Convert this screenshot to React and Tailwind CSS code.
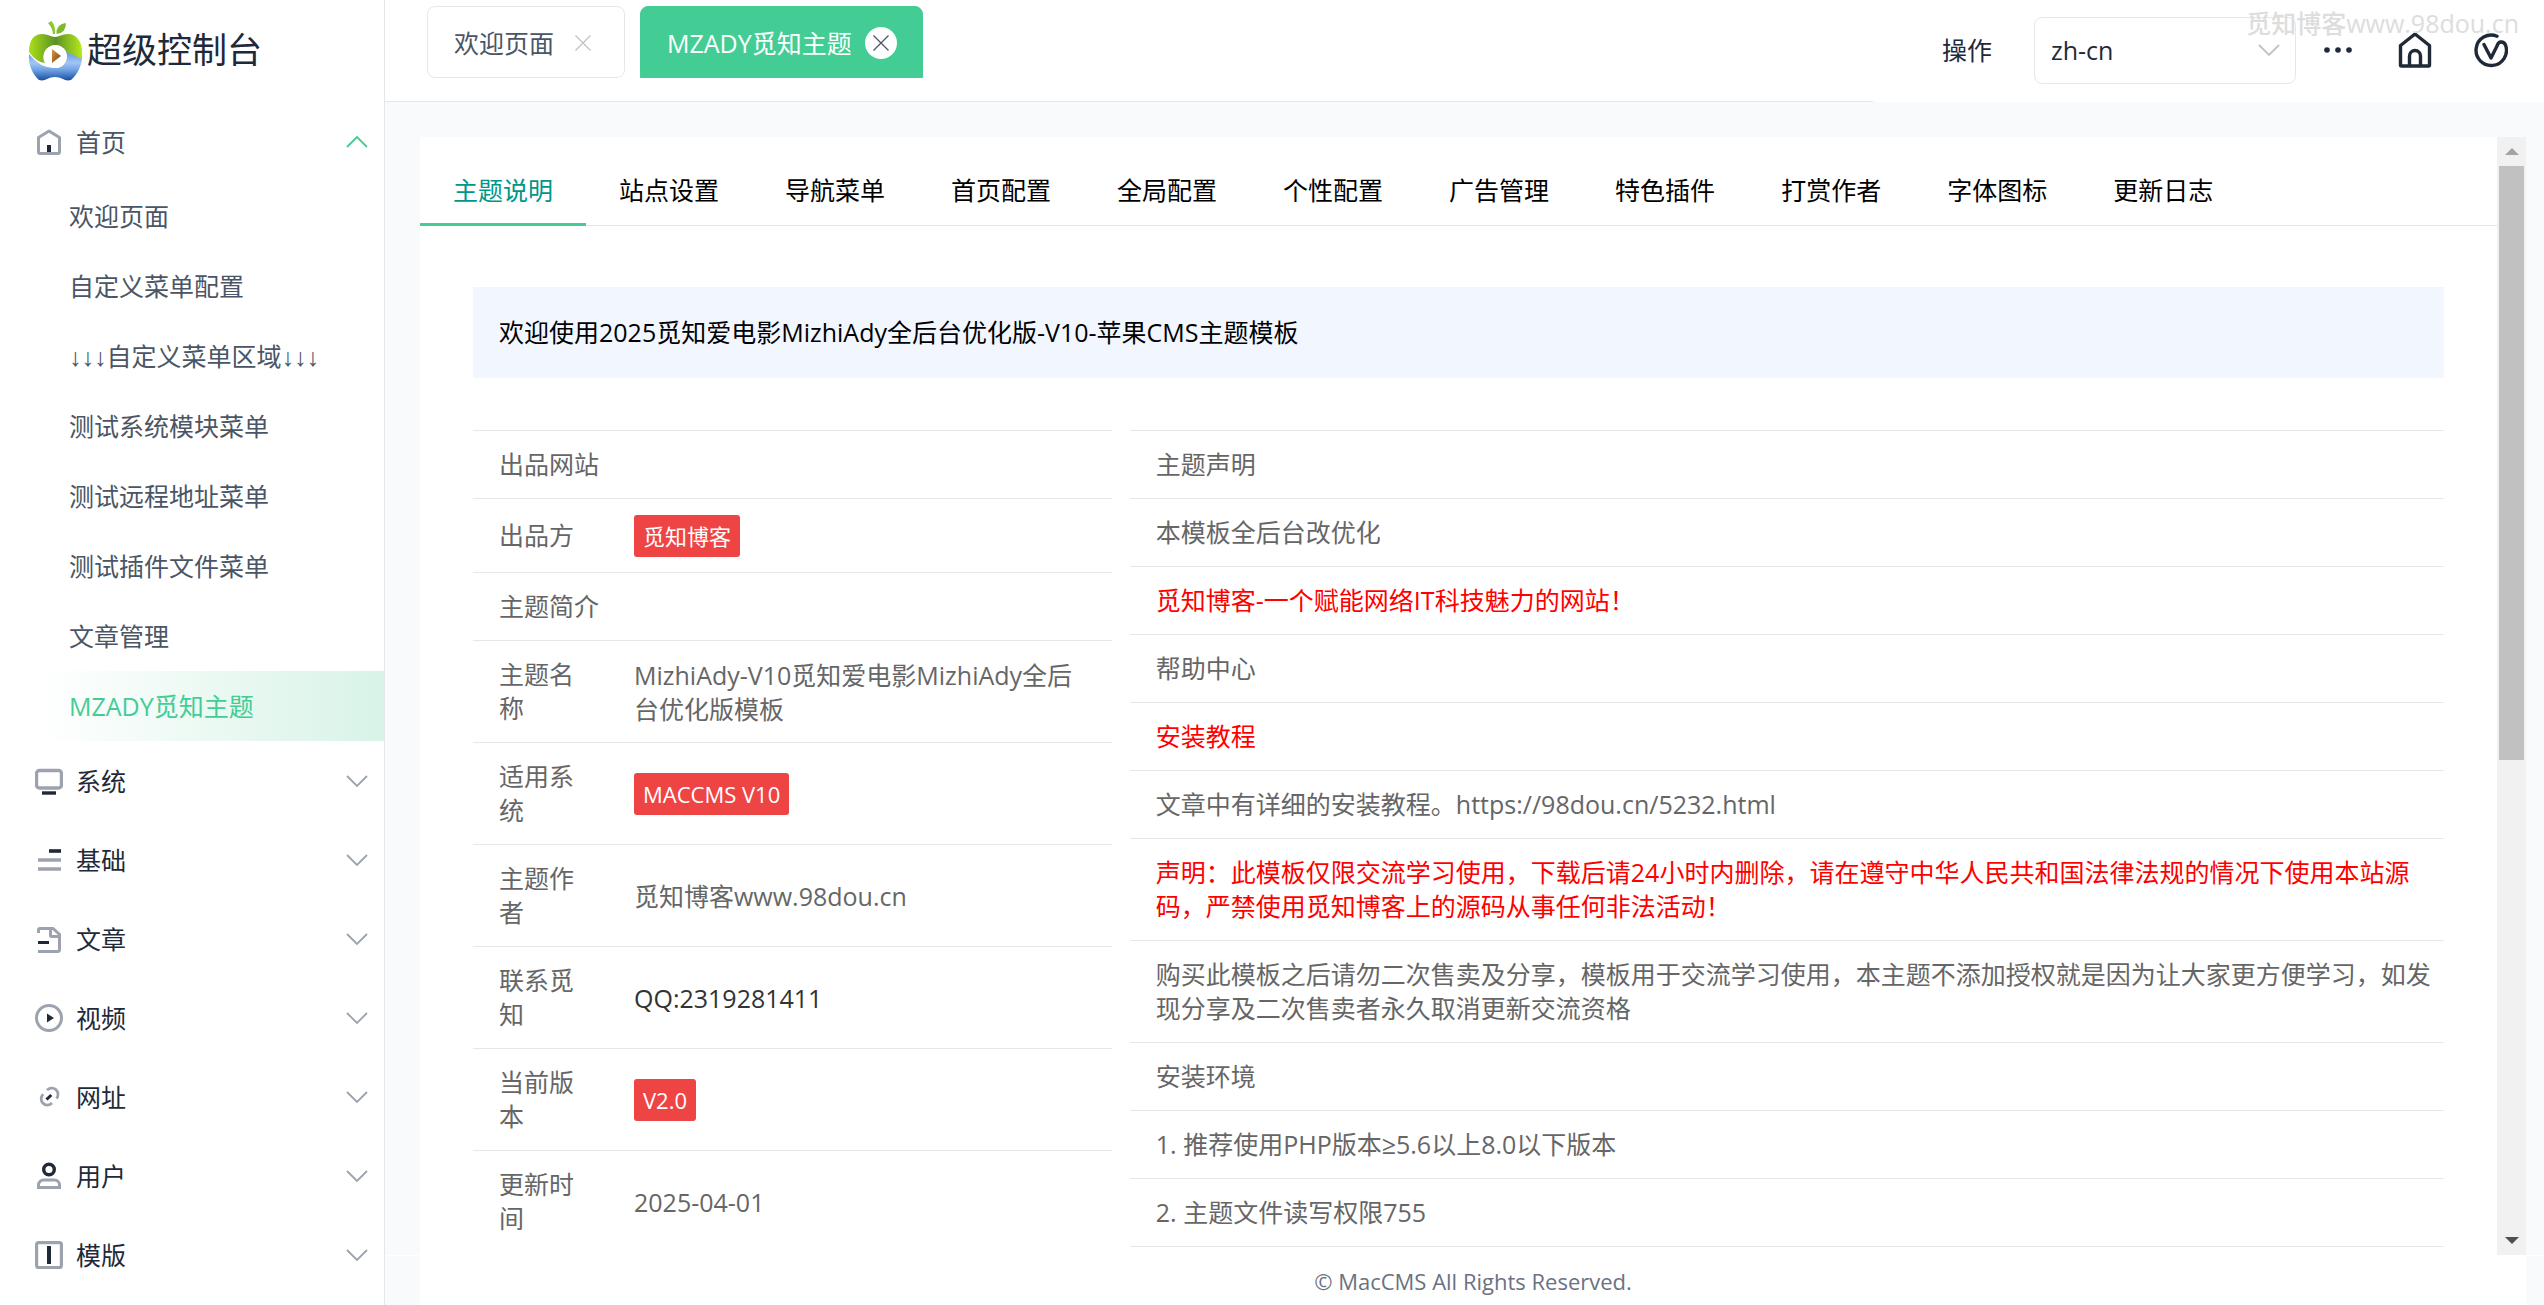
import React, { useState } from 'react';

const menus = [
    { name: '系统', icon: 'monitor' },
    { name: '基础', icon: 'bars' },
    { name: '文章', icon: 'doc' },
    { name: '视频', icon: 'video' },
    { name: '网址', icon: 'link' },
    { name: '用户', icon: 'user' },
    { name: '模版', icon: 'template' },
];

const subMenus = [
    '欢迎页面',
    '自定义菜单配置',
    '↓↓↓自定义菜单区域↓↓↓',
    '测试系统模块菜单',
    '测试远程地址菜单',
    '测试插件文件菜单',
    '文章管理',
    'MZADY觅知主题',
];

const tabs = [
    '主题说明', '站点设置', '导航菜单', '首页配置', '全局配置', '个性配置',
    '广告管理', '特色插件', '打赏作者', '字体图标', '更新日志',
];

const infoRows = [
    { label: '出品网站' },
    { label: '出品方', badge: '觅知博客' },
    { label: '主题简介' },
    { label: '主题名称', value: 'MizhiAdy-V10觅知爱电影MizhiAdy全后台优化版模板' },
    { label: '适用系统', badge: 'MACCMS V10' },
    { label: '主题作者', value: '觅知博客www.98dou.cn' },
    { label: '联系觅知', link: 'QQ:2319281411' },
    { label: '当前版本', badge: 'V2.0' },
    { label: '更新时间', value: '2025-04-01' },
];

const notices = [
    { text: '主题声明' },
    { text: '本模板全后台改优化' },
    { text: '觅知博客-一个赋能网络IT科技魅力的网站！', red: true },
    { text: '帮助中心' },
    { text: '安装教程', red: true },
    { text: '文章中有详细的安装教程。https://98dou.cn/5232.html' },
    { text: '声明：此模板仅限交流学习使用，下载后请24小时内删除，请在遵守中华人民共和国法律法规的情况下使用本站源码，严禁使用觅知博客上的源码从事任何非法活动！', red: true },
    { text: '购买此模板之后请勿二次售卖及分享，模板用于交流学习使用，本主题不添加授权就是因为让大家更方便学习，如发现分享及二次售卖者永久取消更新交流资格' },
    { text: '安装环境' },
    { text: '1. 推荐使用PHP版本≥5.6以上8.0以下版本' },
    { text: '2. 主题文件读写权限755' },
];

const GRAY = '#9ca3af';
const DARK = '#1f2937';

const MenuIcon = ({ name }) => (
    <svg viewBox="0 0 28 28" className="size-7 shrink-0" fill="none" stroke={GRAY} strokeWidth="3" aria-hidden="true">
        {name === 'home' && (
            <>
                <path d="M3.5 9.5 14 3l10.500 6.500V24a1.500 1.500 0 0 1-1.500 1.500H5A1.500 1.500 0 0 1 3.500 24Z" strokeLinejoin="round" />
                <path d="M14 17v7" stroke={DARK} strokeWidth="4" />
            </>
        )}
        {name === 'monitor' && (
            <>
                <rect x="1.500" y="3.500" width="25" height="17.500" rx="3" strokeWidth="3.400" />
                <path d="M7 26h14" stroke={DARK} strokeWidth="3.400" />
            </>
        )}
        {name === 'bars' && (
            <>
                <path d="M14 5h12" stroke={DARK} strokeWidth="3.600" />
                <path d="M3 14h23M3 23h23" strokeWidth="3.600" />
            </>
        )}
        {name === 'doc' && (
            <>
                <path d="M3.500 8V5A1.500 1.500 0 0 1 5 3.500h13l6.500 6V25a1.500 1.500 0 0 1-1.500 1.500H3" />
                <path d="M15.500 4v6.500a1 1 0 0 0 1 1H24" />
                <path d="M3 17.500h11" stroke={DARK} />
            </>
        )}
        {name === 'video' && (
            <>
                <circle cx="14" cy="14" r="12.500" />
                <path d="M12 9.500v9l7-4.500Z" fill={DARK} stroke="none" />
            </>
        )}
        {name === 'link' && (
            <>
                <path d="M12 7.200a6.200 6.200 0 1 1 9.500 8.300M8.300 11.200a6.200 6.200 0 1 0 8.700 8.800" strokeWidth="2.800" />
                <path d="M11.500 16.500 16.300 12" stroke={DARK} />
            </>
        )}
        {name === 'user' && (
            <>
                <circle cx="14" cy="7.500" r="5.300" stroke={DARK} strokeWidth="3.400" />
                <path d="M3.500 25.500v-2.500a5 5 0 0 1 5-5h11a5 5 0 0 1 5 5v2.500Z" />
            </>
        )}
        {name === 'template' && (
            <>
                <rect x="1.600" y="1.600" width="24.800" height="25" rx="2" strokeWidth="3.200" />
                <path d="M14 5v18" stroke={DARK} strokeWidth="4" />
            </>
        )}
    </svg>
);

const Chevron = ({ up }) => (
    <svg viewBox="0 0 22 12" className="w-[22px] h-3" fill="none" strokeWidth="1.800" aria-hidden="true">
        {up
            ? <path d="M1 11 11 1l10 10" stroke="#43cd94" />
            : <path d="M1 1l10 10L21 1" stroke={GRAY} />}
    </svg>
);

const Logo = () => (
    <svg viewBox="0 0 54 61" className="w-[54px] h-[61px]" aria-hidden="true">
        <defs>
            <linearGradient id="leaf" x1="0" x2="1" y1="0" y2="0">
                <stop offset="0" stopColor="#a9e015" />
                <stop offset="0.500" stopColor="#5c9128" />
                <stop offset="1" stopColor="#b4ea1a" />
            </linearGradient>
            <linearGradient id="water" x1="0" x2="0" y1="0" y2="1">
                <stop offset="0" stopColor="#5b93dc" />
                <stop offset="0.400" stopColor="#a3c5f5" />
                <stop offset="0.650" stopColor="#6ea0e2" />
                <stop offset="1" stopColor="#1750a0" />
            </linearGradient>
            <linearGradient id="play" x1="0" x2="1" y1="0" y2="1">
                <stop offset="0" stopColor="#e39a3f" />
                <stop offset="1" stopColor="#6d3f12" />
            </linearGradient>
        </defs>
        <path d="M20 3 23.500 1Q28 7 27 14h-2Q24.500 8 20 3Z" fill="#8cc827" />
        <path d="M28.500 14Q28 4 38 3 38 13 28.500 14Z" fill="#7cba28" />
        <path d="M1 32C1 20 6 14 14 14c6 0 9 3 13 3s7-3 13-3c8 0 14 7 14 18v8L37 31a11 11 0 0 0-20 12Q9 43 1 32Z" fill="url(#leaf)" />
        <path d="M1 34Q12 48 26 48T37 31l17 8c-1 8-5 16-11 21-6 2-9-3-16-3s-10 5-16 3C5 55 0 45 1 34Z" fill="url(#water)" />
        <circle cx="27.500" cy="36.500" r="11.500" fill="#fff" />
        <path d="M24 29v14l9-7Z" fill="url(#play)" />
    </svg>
);

const CloseIcon = ({ color }) => (
    <svg viewBox="0 0 16 16" className="size-4" fill="none" stroke={color} strokeWidth="1.300" aria-hidden="true">
        <path d="M0.500 0.500l15 15M15.500 0.500l-15 15" />
    </svg>
);

const SubMenuText = ({ text }) => {
    const parts = text.split('↓↓↓');
    if (parts.length === 1) return text;
    const arrows = <span className="font-['Liberation_Sans',sans-serif]">↓↓↓</span>;
    return <>{arrows}{parts[1]}{arrows}</>;
};

const Sidebar = () => {
    const [active, setActive] = useState('MZADY觅知主题');

    return (
        <aside className="w-[385px] shrink-0 bg-white border-r border-gray-200 overflow-hidden">
            {/* Logo */}
            <div className="h-[102px] pl-7 pb-[2px] flex items-center gap-[5px]">
                <Logo />
                <h1 className="text-[35px] text-gray-800">超级控制台</h1>
            </div>

            {/* Menu */}
            <nav>
                <a href="#home" className="h-[79px] pl-[35px] pr-4 flex items-center text-gray-600">
                    <MenuIcon name="home" />
                    <span className="ml-[13px] flex-1">首页</span>
                    <Chevron up />
                </a>
                <ul>
                    {subMenus.map((item) => (
                        <li key={item}>
                            <a
                                href="#page"
                                onClick={() => setActive(item)}
                                className={
                                    active === item
                                        ? 'h-[70px] pl-[69px] flex items-center bg-gradient-to-r from-white from-10% to-[#d8f3e7] text-[#43cd94]'
                                        : 'h-[70px] pl-[69px] flex items-center text-gray-600'
                                }
                            >
                                <span><SubMenuText text={item} /></span>
                            </a>
                        </li>
                    ))}
                </ul>
                {menus.map((item) => (
                    <a key={item.name} href="#menu" className="h-[79px] pl-[35px] pr-4 flex items-center text-gray-800">
                        <MenuIcon name={item.icon} />
                        <span className="ml-[13px] flex-1">{item.name}</span>
                        <Chevron />
                    </a>
                ))}
            </nav>
        </aside>
    );
};

const Header = () => (
    <header className="h-[102px] shrink-0 flex bg-white">
        <div className="flex-1 flex items-start gap-[15px] pl-[42px] pt-[6px] border-b border-gray-200">
            <div className="h-[72px] pl-[26px] pr-[25px] pt-[2px] flex items-center gap-[13px] border border-gray-200 rounded-lg text-gray-600">
                <a href="#welcome">欢迎页面</a>
                <button type="button" aria-label="关闭" className="size-8 flex items-center justify-center">
                    <CloseIcon color="#c2c2c2" />
                </button>
            </div>
            <div className="h-[72px] pl-[26px] pr-[25px] pt-[2px] flex items-center gap-[13px] border border-[#43cd94] bg-[#43cd94] rounded-t-lg text-white">
                <a href="#theme">MZADY觅知主题</a>
                <button type="button" aria-label="关闭" className="size-8 flex items-center justify-center rounded-full bg-white">
                    <CloseIcon color="#4b5563" />
                </button>
            </div>
        </div>

        <div className="w-[671px] pr-9 pb-[2px] flex items-center justify-end text-gray-800">
            <label htmlFor="lang" className="mr-[42px]">操作</label>
            <div className="relative">
                <select
                    id="lang"
                    defaultValue="zh-cn"
                    className="w-[262px] h-[67px] pl-4 appearance-none bg-white border border-gray-200 rounded-lg"
                >
                    <option value="zh-cn">zh-cn</option>
                </select>
                <svg viewBox="0 0 22 12" className="absolute right-4 top-[27px] w-[22px] h-3 pointer-events-none" fill="none" stroke="#c2c2c2" strokeWidth="1.800">
                    <path d="M1 1l10 10L21 1" />
                </svg>
            </div>
            <button type="button" aria-label="更多" className="ml-7">
                <svg viewBox="0 0 28 6" className="w-7 h-[6px]" fill={DARK}>
                    <circle cx="3" cy="3" r="2.800" />
                    <circle cx="14" cy="3" r="2.800" />
                    <circle cx="25" cy="3" r="2.800" />
                </svg>
            </button>
            <button type="button" aria-label="主页" className="ml-[46px]">
                <svg viewBox="0 0 34 36" className="w-[34px] h-9" fill="none" stroke={DARK} strokeWidth="3.400" strokeLinejoin="round">
                    <path d="M2.500 13.500 17 2l14.500 11.500V33a1 1 0 0 1-1 1h-27a1 1 0 0 1-1-1Z" />
                    <path d="M11.500 33V24a5.500 5.500 0 0 1 11 0v9" />
                </svg>
            </button>
            <button type="button" aria-label="版本" className="ml-[42px]">
                <svg viewBox="0 0 34 36" className="w-[34px] h-9" fill="none" stroke={DARK} strokeWidth="3.400" strokeLinecap="round" strokeLinejoin="round">
                    <path d="M23 4.200A15.200 15.200 0 1 0 31.500 13q-1.500-3.500-5-3-2.500.500-3.500 4L17 26 10 12.500" />
                </svg>
            </button>
        </div>
    </header>
);

const Badge = ({ children }) => (
    <span className="inline-flex items-center h-[42px] px-[9px] rounded-[3px] bg-[#ef4444] text-white text-[22px] align-top">
        {children}
    </span>
);

const InfoTable = () => (
    <table className="w-full table-fixed border-t border-gray-200 text-[#666]">
        <colgroup>
            <col className="w-[135px]" />
            <col />
        </colgroup>
        <tbody>
            {infoRows.map((row) => {
                const single = !row.value && !row.badge && !row.link;
                return (
                    <tr key={row.label} className="border-b border-gray-200 last:border-b-0">
                        <th scope="row" colSpan={single ? 2 : 1} className="px-[26px] pt-4 pb-[17px] text-left font-normal">
                            {row.label}
                        </th>
                        {!single && (
                            <td className="px-[26px] pt-4 pb-[15px]">
                                {row.badge && <Badge>{row.badge}</Badge>}
                                {row.link && <a href="#contact" className="text-[#333]">{row.link}</a>}
                                {row.value}
                            </td>
                        )}
                    </tr>
                );
            })}
        </tbody>
    </table>
);

const NoticeTable = () => (
    <table className="w-full border-t border-gray-200 text-[#666]">
        <tbody>
            {notices.map((row) => (
                <tr key={row.text} className="border-b border-gray-200">
                    <td className={row.red ? 'pl-[26px] pr-2 pt-4 pb-[17px] text-[#ff0000]' : 'pl-[26px] pr-2 pt-4 pb-[17px]'}>
                        {row.text}
                    </td>
                </tr>
            ))}
        </tbody>
    </table>
);

const Scrollbar = () => (
    <div className="w-[29px] shrink-0 flex flex-col bg-[#f1f1f1]">
        <div className="h-[29px] flex items-center justify-center">
            <svg viewBox="0 0 14 7" className="w-[14px] h-[7px]" fill="#a3a3a3"><path d="M0 7 7 0l7 7Z" /></svg>
        </div>
        <div className="flex-1 px-[2px]">
            <div className="h-[56%] bg-[#c1c1c1]" />
        </div>
        <div className="h-[29px] flex items-center justify-center">
            <svg viewBox="0 0 14 7" className="w-[14px] h-[7px]" fill="#505050"><path d="M0 0h14L7 7Z" /></svg>
        </div>
    </div>
);

const App = () => {
    const [tab, setTab] = useState('主题说明');

    return (
        <div className="relative h-screen flex overflow-hidden bg-[#f9fafc] text-[25px] leading-[34px] font-['Open_Sans','Noto_Sans_CJK_SC',sans-serif]">
            <Sidebar />

            <div className="flex-1 min-w-0 flex flex-col">
                <Header />

                {/* Main Content */}
                <main className="flex-1 min-h-0 pt-[35px] pl-[35px] pr-[18px] flex">
                    <div className="flex-1 min-w-0 bg-white overflow-hidden">
                        <div role="tablist" className="pt-5 flex border-b border-gray-200">
                            {tabs.map((item) => (
                                <button
                                    key={item}
                                    type="button"
                                    role="tab"
                                    aria-selected={tab === item}
                                    onClick={() => setTab(item)}
                                    className={
                                        tab === item
                                            ? 'h-[69px] -mb-px px-[33px] border-b-3 border-[#43cd94] text-[#009688] whitespace-nowrap'
                                            : 'h-[69px] -mb-px px-[33px] border-b-3 border-transparent text-black whitespace-nowrap'
                                    }
                                >
                                    {item}
                                </button>
                            ))}
                        </div>

                        <div className="px-[53px] pt-[61px]">
                            <p className="px-[26px] pt-7 pb-[29px] bg-[#f2f6ff] text-black">
                                欢迎使用2025觅知爱电影MizhiAdy全后台优化版-V10-苹果CMS主题模板
                            </p>
                            <div className="mt-[52px] grid grid-cols-[35fr_72fr] items-start gap-[18px]">
                                <InfoTable />
                                <NoticeTable />
                            </div>
                        </div>
                    </div>
                    <Scrollbar />
                </main>

                {/* Footer */}
                <footer className="h-[50px] shrink-0 pl-[35px] pr-[18px] border-t border-white">
                    <p className="h-full pt-2 bg-white text-center text-[22px] text-gray-500">© MacCMS All Rights Reserved.</p>
                </footer>
            </div>

            <span className="absolute top-[6px] right-[25px] text-[#dddddd] font-medium pointer-events-none">觅知博客www.98dou.cn</span>
        </div>
    );
};

export default App;
